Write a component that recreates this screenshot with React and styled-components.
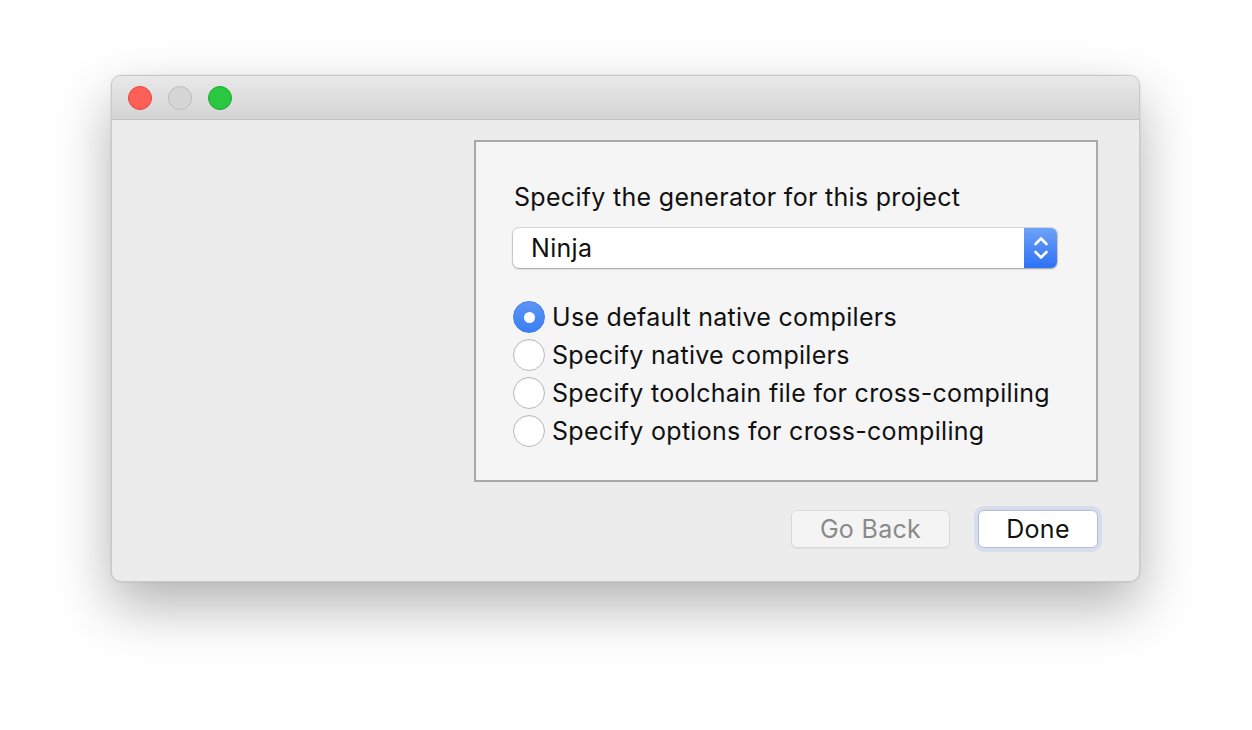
import React from 'react';
import styled, { createGlobalStyle } from 'styled-components';

const GlobalStyle = createGlobalStyle`
  html, body {
    margin: 0;
    padding: 0;
    background: #ffffff;
  }
  body {
    font-family: Inter, "Liberation Sans", Arial, sans-serif;
    -webkit-font-smoothing: antialiased;
  }
`;

const Page = styled.div`
  width: 1252px;
  height: 730px;
  padding: 75px 0 0 111px;
  box-sizing: border-box;
`;

const Window = styled.div`
  width: 1029px;
  height: 507px;
  box-sizing: border-box;
  border-radius: 10px;
  border: 1px solid #c9c9c9;
  background: #ececec;
  overflow: hidden;
  display: flex;
  flex-direction: column;
  box-shadow: 0 24px 56px rgba(0, 0, 0, 0.3), 0 0 2px rgba(0, 0, 0, 0.15);
`;

const TitleBar = styled.div`
  height: 44px;
  flex: none;
  box-sizing: border-box;
  border-bottom: 1px solid #c2c2c2;
  background: linear-gradient(#e9e9e9, #d4d4d4);
  display: flex;
  align-items: center;
  gap: 16px;
  padding-left: 16px;
`;

const Light = styled.span`
  width: 24px;
  height: 24px;
  border-radius: 50%;
  box-sizing: border-box;
  background: ${p => p.$bg};
  border: 1px solid ${p => p.$edge};
`;

const Body = styled.div`
  flex: 1;
  display: flex;
  flex-direction: column;
  align-items: flex-end;
  padding: 20px 41px 0 0;
`;

const Panel = styled.div`
  width: 624px;
  height: 342px;
  box-sizing: border-box;
  border: 2px solid #a9a9a9;
  background: #f5f5f5;
  padding: 38px 0 0 38px;
`;

const Heading = styled.div`
  font-size: 25px;
  letter-spacing: 0.3px;
  line-height: 34px;
  color: #111;
`;

const Select = styled.div`
  margin-top: 14px;
  width: 544px;
  height: 40px;
  box-sizing: border-box;
  border-radius: 6px;
  background: #ffffff;
  box-shadow: 0 0 0 1px rgba(0, 0, 0, 0.12), 0 1px 2px rgba(0, 0, 0, 0.25);
  display: flex;
  align-items: center;
  overflow: hidden;
  margin-left: -1px;
`;

const SelectValue = styled.span`
  flex: 1;
  padding-left: 18px;
  font-size: 25px;
  letter-spacing: 0.3px;
  color: #111;
`;

const Stepper = styled.span`
  width: 33px;
  height: 100%;
  background: linear-gradient(#6ea2f8, #2d72f6);
  display: flex;
  align-items: center;
  justify-content: center;
`;

const RadioList = styled.div`
  margin-top: 33px;
  margin-left: -1px;
  display: flex;
  flex-direction: column;
  gap: 6px;
`;

const RadioRow = styled.label`
  display: flex;
  align-items: center;
  gap: 7px;
  height: 32px;
  font-size: 25px;
  letter-spacing: 0.3px;
  color: #111;
`;

const RadioDot = styled.span`
  width: 32px;
  height: 32px;
  border-radius: 50%;
  box-sizing: border-box;
  display: flex;
  align-items: center;
  justify-content: center;
  background: ${p => (p.$on ? 'linear-gradient(#5d95f5, #3a7ff2)' : '#ffffff')};
  border: 1px solid ${p => (p.$on ? '#3b7ef0' : '#b9b9b9')};
  box-shadow: ${p => (p.$on ? 'none' : 'inset 0 1px 1px rgba(0,0,0,0.05)')};

  &::after {
    content: '';
    display: ${p => (p.$on ? 'block' : 'none')};
    width: 11px;
    height: 11px;
    border-radius: 50%;
    background: #ffffff;
  }
`;

const Buttons = styled.div`
  margin-top: 28px;
  display: flex;
  align-items: center;
  gap: 28px;
`;

const Button = styled.button`
  height: 38px;
  box-sizing: border-box;
  width: ${p => p.$w}px;
  border-radius: 6px;
  font-family: inherit;
  font-size: 25px;
  letter-spacing: 0.3px;
  padding: 0;
  background: ${p => (p.$primary ? '#ffffff' : '#f4f4f4')};
  color: ${p => (p.$primary ? '#111' : '#8a8a8a')};
  border: 1px solid ${p => (p.$primary ? '#b8bdc8' : '#dadada')};
  box-shadow: ${p => (p.$primary ? '0 0 0 4px #d5ddee' : '0 1px 1px rgba(0,0,0,0.05)')};
`;

const options = [
  'Use default native compilers',
  'Specify native compilers',
  'Specify toolchain file for cross-compiling',
  'Specify options for cross-compiling',
];

export default function App() {
  return (
    <Page>
      <GlobalStyle />
      <Window>
        <TitleBar>
          <Light $bg="#fe5f57" $edge="#e2463f" />
          <Light $bg="#d6d6d6" $edge="#bdbdbd" />
          <Light $bg="#2ac840" $edge="#1fa830" />
        </TitleBar>
        <Body>
          <Panel>
            <Heading>Specify the generator for this project</Heading>
            <Select>
              <SelectValue>Ninja</SelectValue>
              <Stepper>
                <svg width="16" height="28" viewBox="0 0 16 28" fill="none" stroke="#fff" strokeWidth="2.6" strokeLinecap="round" strokeLinejoin="round">
                  <path d="M2.5 10 L8 4.5 L13.5 10" />
                  <path d="M2.5 18 L8 23.5 L13.5 18" />
                </svg>
              </Stepper>
            </Select>
            <RadioList>
              {options.map((o, i) => (
                <RadioRow key={o}>
                  <RadioDot $on={i === 0} />
                  {o}
                </RadioRow>
              ))}
            </RadioList>
          </Panel>
          <Buttons>
            <Button $w={159}>Go Back</Button>
            <Button $w={120} $primary>Done</Button>
          </Buttons>
        </Body>
      </Window>
    </Page>
  );
}
